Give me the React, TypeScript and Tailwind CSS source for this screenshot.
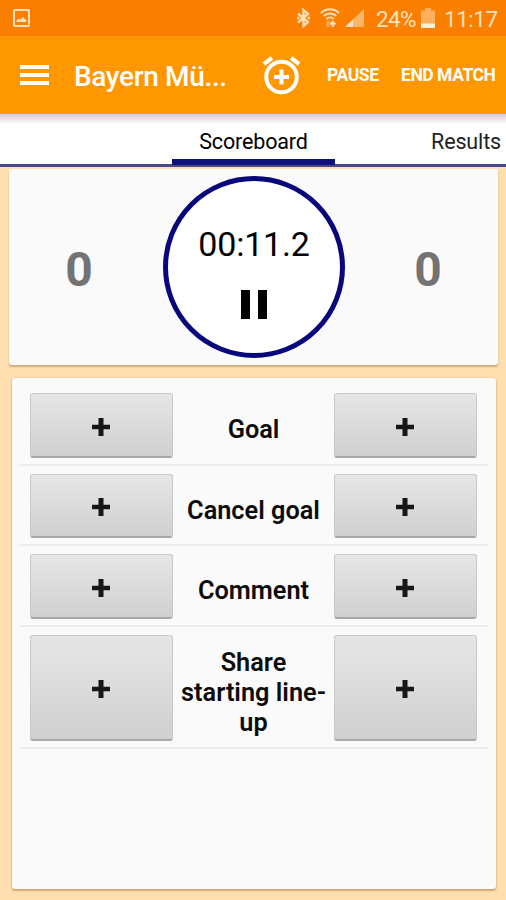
const actions = [
  { label: 'Goal', row: 'h-[81px]' },
  { label: 'Cancel goal', row: 'h-[80px]' },
  { label: 'Comment', row: 'h-[81px]' },
  { label: 'Share starting line-up', row: 'h-[122px]' },
];

function StatusBar() {
  return (
    <div className="flex h-9 items-center justify-between bg-[#fa7f00] pl-[13px] pr-[9px] text-[#fee0bd]">
      <svg width="17" height="18" viewBox="0 0 17 18">
        <rect x="1" y="1" width="15" height="16" rx="1" fill="none" stroke="currentColor" strokeWidth="2" />
        <path d="M3.5 13V11.5L6 9.5L7.5 10.5L10 8L13.5 11.5V13Z" fill="currentColor" />
      </svg>
      <div className="flex items-center">
        {/* Bluetooth */}
        <svg className="mr-[10px]" width="13" height="20" viewBox="0 0 13 20" fill="none" stroke="currentColor" strokeWidth="2.3">
          <path d="M1 5.5L11 14L6.5 18V2L11 6L1 14.5" />
          <path d="M0 10H2.5M10.5 10H13" />
        </svg>
        {/* Wifi */}
        <svg className="mr-[5px]" width="20" height="20" viewBox="0 0 20 20" fill="none" stroke="currentColor" strokeWidth="2">
          <path d="M1 5C6 0 14 0 19 5" />
          <path d="M3.8 8C7.3 4.6 12.7 4.6 16.2 8" />
          <path d="M6.5 11C8.5 9 11.5 9 13.5 11" />
          <path d="M8 12.5V19" opacity=".45" strokeWidth="3" />
          <path d="M12.8 19V14M10.3 16.5L12.8 13.8L15.3 16.5" strokeWidth="2" />
        </svg>
        {/* Signal */}
        <svg className="mr-3" width="19" height="18" viewBox="0 0 19 18">
          <path d="M0 18L19 0V18Z" fill="#fdb568" />
          <path d="M0 18L8 10.4V18Z" fill="currentColor" />
        </svg>
        <span className="w-[40px] whitespace-nowrap pt-0.5 text-[22.5px] leading-9 tracking-[-0.6px]">24%</span>
        {/* Battery */}
        <svg className="ml-[5px] mr-[9px]" width="14" height="20" viewBox="0 0 14 20">
          <path d="M4 0H10V2.5H14V20H0V2.5H4Z" fill="#fdb05c" />
          <path d="M0 15.5H14V20H0Z" fill="#fff0dc" />
        </svg>
        <span className="w-[53px] whitespace-nowrap pt-0.5 text-[22.5px] leading-9 tracking-[-0.5px]">11:17</span>
      </div>
    </div>
  );
}

function AppBar() {
  return (
    <header className="flex h-[78px] items-center bg-[#ff9800] pl-5 text-white">
      <svg width="29" height="20" viewBox="0 0 29 20" fill="currentColor">
        <rect width="29" height="4" />
        <rect y="8" width="29" height="4" />
        <rect y="16" width="29" height="4" />
      </svg>
      <h1 className="ml-[25px] w-[188px] whitespace-nowrap pt-[3px] text-[28px] font-medium leading-[75px] tracking-[-0.35px]">Bayern Mü...</h1>
      <svg width="39" height="39" viewBox="0 0 39 39" fill="none" stroke="currentColor" strokeWidth="4">
        <circle cx="19.5" cy="21" r="15.3" />
        <path d="M2 8L10 1.8M29 1.8L37 8" strokeWidth="4.2" />
        <path d="M19.5 13.5V28.5M12 21H27" />
      </svg>
      <button className="ml-[26px] w-[74px] whitespace-nowrap pt-px text-left text-[17.5px] font-bold tracking-[-0.4px]">PAUSE</button>
      <button className="whitespace-nowrap pt-px text-[17.5px] font-bold tracking-[-0.45px]">END MATCH</button>
    </header>
  );
}

function Tabs() {
  return (
    <nav className="flex h-[53px] border-b-[3px] border-[#48488a] bg-white bg-linear-to-b from-[#cfcfcf] to-white to-[10px] text-[21.5px] leading-[56px] tracking-[-0.15px] text-black">
      <div className="w-[172px]" />
      <div className="relative w-[163px] text-center">
        Scoreboard
        <div className="absolute inset-x-0 top-[45px] h-[6px] bg-[#10107c]" />
      </div>
      <div className="flex-1 pr-[5px] text-right text-[#222]">Results</div>
    </nav>
  );
}

function Scoreboard() {
  return (
    <section className="ml-[9px] mr-2 mt-[2px] flex h-[196px] items-start rounded-b-[3px] bg-[#fafafa] shadow-[0_2px_2px_rgba(130,90,40,0.4)]">
      <div className="w-[154px] pr-[14px] text-center text-[48px] font-bold leading-[202px] text-[#737373]">0</div>
      <div className="mt-[7px] flex size-[182px] shrink-0 flex-col items-center rounded-full border-[5px] border-[#08087c] bg-white">
        <div className="mt-[43px] text-[34px] leading-[40px] tracking-[-0.2px] text-black">00:11.2</div>
        <svg className="mt-[26px]" width="26" height="29" viewBox="0 0 26 29">
          <rect width="9" height="29" />
          <rect x="17" width="9" height="29" />
        </svg>
      </div>
      <div className="flex-1 pl-[13px] text-center text-[48px] font-bold leading-[202px] text-[#737373]">0</div>
    </section>
  );
}

function PlusButton() {
  return (
    <button className="flex w-[143px] shrink-0 items-center justify-center rounded-[3px] border border-b-2 border-[#c9c9c9] border-b-[#a8a8a8] bg-linear-to-b from-[#e6e6e6] to-[#d0d0d0]">
      <svg className="mr-px mt-[3px]" width="18" height="18" viewBox="0 0 18 18">
        <path d="M6.5 0H11.5V6.8H18V11.2H11.5V18H6.5V11.2H0V6.8H6.5Z" fill="#161616" />
      </svg>
    </button>
  );
}

function Actions() {
  return (
    <section className="ml-3 mr-[10px] mt-[13px] h-[511px] rounded-[3px] bg-[#fafafa] px-2 pt-[7px] shadow-[0_2px_2px_rgba(130,90,40,0.4),0_0_2px_rgba(130,90,40,0.3)]">
      {actions.map(({ label, row }) => (
        <div key={label} className={`flex border-b-2 border-[#ededed] pb-[6px] pl-[10px] pr-[11px] pt-2 ${row}`}>
          <PlusButton />
          <div className="flex flex-1 items-center justify-center px-1 pt-[9px] text-center text-[25.3px] font-semibold leading-[30px] text-[#0c0c0c]">
            {label}
          </div>
          <PlusButton />
        </div>
      ))}
    </section>
  );
}

export default function App() {
  return (
    <div className="h-[900px] w-[506px] overflow-hidden bg-[#ffdfb0] font-[Roboto,sans-serif]">
      <StatusBar />
      <AppBar />
      <Tabs />
      <Scoreboard />
      <Actions />
    </div>
  );
}
